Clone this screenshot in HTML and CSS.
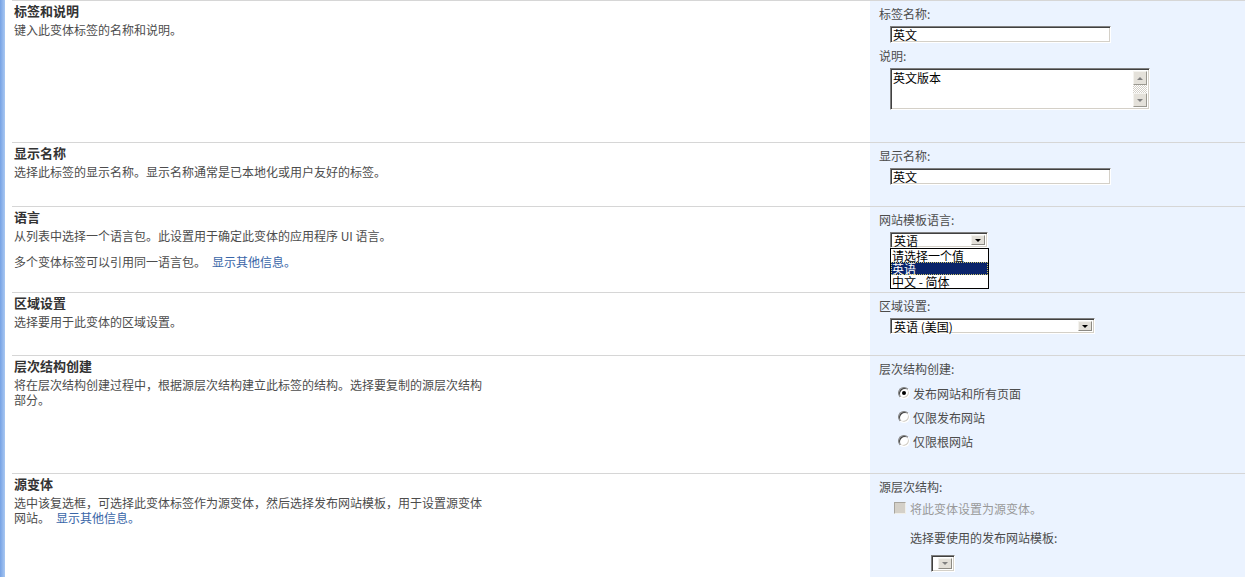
FILE: index.html
```html
<!DOCTYPE html>
<html lang="zh-CN">
<head>
	<meta charset="utf-8">
	<title>变体标签</title>
	<link rel="stylesheet" href="styles.css">
</head>
<body>
<div class="page">
	<div class="edge"></div>
	<div class="sections">

		<!-- 标签和说明 -->
		<div class="section">
			<div class="section-info">
				<h3>标签和说明</h3>
				<p>键入此变体标签的名称和说明。</p>
			</div>
			<div class="section-body gap-32">
				<div class="field-label">标签名称:</div>
				<div class="field"><input class="textbox sunken" type="text" value="英文"></div>
				<div class="field-label">说明:</div>
				<div class="field">
					<div class="textarea sunken">
						<div class="textarea-text">英文版本</div>
						<div class="scrollbar">
							<div class="scroll-btn"><span class="arrow-up"></span></div>
							<div class="scroll-track"></div>
							<div class="scroll-btn"><span class="arrow-down grey"></span></div>
						</div>
					</div>
				</div>
			</div>
		</div>

		<!-- 显示名称 -->
		<div class="section">
			<div class="section-info">
				<h3>显示名称</h3>
				<p>选择此标签的显示名称。显示名称通常是已本地化或用户友好的标签。</p>
			</div>
			<div class="section-body">
				<div class="field-label">显示名称:</div>
				<div class="field"><input class="textbox sunken" type="text" value="英文"></div>
			</div>
		</div>

		<!-- 语言 -->
		<div class="section">
			<div class="section-info">
				<h3>语言</h3>
				<p>从列表中选择一个语言包。此设置用于确定此变体的应用程序 UI 语言。</p>
				<p>多个变体标签可以引用同一语言包。<a class="more" href="#">显示其他信息。</a></p>
			</div>
			<div class="section-body gap-44">
				<div class="field-label">网站模板语言:</div>
				<div class="field">
					<div class="select-wrap">
						<div class="select sunken">
							<span class="select-text">英语</span>
							<span class="select-btn"><span class="arrow-down"></span></span>
						</div>
						<ul class="dropdown">
							<li>请选择一个值</li>
							<li class="selected">英语</li>
							<li>中文 - 简体</li>
						</ul>
					</div>
				</div>
			</div>
		</div>

		<!-- 区域设置 -->
		<div class="section">
			<div class="section-info">
				<h3>区域设置</h3>
				<p>选择要用于此变体的区域设置。</p>
			</div>
			<div class="section-body">
				<div class="field-label">区域设置:</div>
				<div class="field">
					<div class="select wide sunken">
						<span class="select-text">英语 (美国)</span>
						<span class="select-btn"><span class="arrow-down"></span></span>
					</div>
				</div>
			</div>
		</div>

		<!-- 层次结构创建 -->
		<div class="section">
			<div class="section-info">
				<h3>层次结构创建</h3>
				<p>将在层次结构创建过程中，根据源层次结构建立此标签的结构。选择要复制的源层次结构部分。</p>
			</div>
			<div class="section-body gap-20">
				<div class="field-label">层次结构创建:</div>
				<div class="radio-list">
					<div class="radio-row"><span class="radio checked"></span>发布网站和所有页面</div>
					<div class="radio-row"><span class="radio"></span>仅限发布网站</div>
					<div class="radio-row"><span class="radio"></span>仅限根网站</div>
				</div>
			</div>
		</div>

		<!-- 源变体 -->
		<div class="section last">
			<div class="section-info">
				<h3>源变体</h3>
				<p>选中该复选框，可选择此变体标签作为源变体，然后选择发布网站模板，用于设置源变体网站。<a class="more" href="#">显示其他信息。</a></p>
			</div>
			<div class="section-body">
				<div class="field-label">源层次结构:</div>
				<div class="check-row"><span class="checkbox"></span>将此变体设置为源变体。</div>
				<div class="sub-label">选择要使用的发布网站模板:</div>
				<div class="sub-field">
					<div class="select tiny sunken">
						<span class="select-text"></span>
						<span class="select-btn"><span class="arrow-down grey"></span></span>
					</div>
				</div>
			</div>
		</div>

	</div>
</div>
</body>
</html>
```

FILE: styles.css
```css
* { box-sizing: border-box; }

body {
	margin: 0;
	background: #fff;
	color: #4c4c4c;
	font-family: "Noto Sans CJK SC", sans-serif;
	font-size: 12px;
}

.page { display: flex; min-height: 100vh; }
.edge { width: 5px; background: linear-gradient(to right, #76a2e4, #a9c8f2); }

.sections {
	flex: 1;
	margin: 0 3px 0 7px;
	display: flex;
	flex-direction: column;
}

.section { display: flex; border-top: 1px solid #d6d6d6; }
.section.last { flex: 1; }

.section-info { width: 858px; padding: 2px 0 0 2px; }
.section-info h3 {
	margin: 0;
	font-size: 13px;
	line-height: 16px;
	font-weight: bold;
	color: #333;
}
.section-info p { margin: 3px 0 0; max-width: 470px; line-height: 15px; }
.section-info p + p { margin-top: 11px; }

a.more { color: #3966a8; text-decoration: none; margin-left: 6px; }

.section-body { flex: 1; background: #ebf3ff; padding: 5px 0 21px 9px; }
.section-body.gap-20 { padding-bottom: 20px; }
.section-body.gap-32 { padding-bottom: 32px; }
.section-body.gap-44 { padding-bottom: 44px; }

.field-label { line-height: 16px; color: #4c4c4c; }
.field { margin-top: 4px; padding-left: 11px; }
.field + .field-label { margin-top: 5px; }

/* classic sunken border */
.sunken {
	border: 1px solid;
	border-color: #808080 #fff #fff #808080;
	box-shadow: inset 1px 1px 0 #404040, inset -1px -1px 0 #d4d0c8;
	background: #fff;
}

.textbox {
	display: block;
	width: 221px;
	height: 17px;
	margin: 0;
	padding: 0 2px;
	font-family: inherit;
	font-size: 12px;
	color: #000;
	outline: none;
}

.textarea { display: flex; width: 260px; height: 42px; padding: 2px; }
.textarea-text { flex: 1; color: #000; line-height: 13px; padding-left: 0; }

.scrollbar { width: 14px; display: flex; flex-direction: column; }
.scroll-btn {
	height: 14px;
	display: flex;
	align-items: center;
	justify-content: center;
	background: #e4e1da;
	border: 1px solid;
	border-color: #f4f3ef #9a9890 #9a9890 #f4f3ef;
}
.scroll-track {
	flex: 1;
	background-image: repeating-conic-gradient(#d4d0c8 0 25%, #fff 0 50%);
	background-size: 2px 2px;
}

.arrow-up, .arrow-down { width: 0; height: 0; border-left: 3px solid transparent; border-right: 3px solid transparent; }
.arrow-up { border-bottom: 3px solid #808080; }
.arrow-down { border-top: 3px solid #000; }
.arrow-down.grey { border-top-color: #808080; }

.select-wrap { position: relative; width: 98px; }
.select { display: flex; width: 98px; height: 16px; padding: 2px; }
.select.wide { width: 205px; }
.select.tiny { width: 24px; height: 17px; }
.select-text { flex: 1; line-height: 12px; color: #000; padding-left: 1px; white-space: nowrap; }
.select-btn {
	width: 14px;
	display: flex;
	align-items: center;
	justify-content: center;
	background: #e2dfd8;
	border: 1px solid;
	border-color: #f4f3ef #8c8a84 #8c8a84 #f4f3ef;
}

.dropdown {
	position: absolute;
	top: 100%;
	left: 0;
	width: 99px;
	margin: 0;
	padding: 0;
	list-style: none;
	background: #fff;
	border: 1px solid #000;
	color: #000;
}
.dropdown li { height: 13px; line-height: 13px; padding-left: 1px; white-space: nowrap; }
.dropdown li.selected { background: #0a246a; color: #fff; outline: 1px dotted #c8c26c; outline-offset: -1px; }

.radio-list { margin-top: 4px; padding-left: 19px; }
.radio-row { display: flex; align-items: center; gap: 3px; height: 24px; color: #4c4c4c; }
.radio {
	width: 12px;
	height: 12px;
	border-radius: 50%;
	border: 1px solid;
	border-color: #808080 #fff #fff #808080;
	box-shadow: inset 1px 1px 0 #404040, inset -1px -1px 0 #d4d0c8;
	background: #fff;
	display: flex;
	align-items: center;
	justify-content: center;
}
.radio.checked::after { content: ""; width: 4px; height: 4px; border-radius: 50%; background: #000; }

.check-row { display: flex; align-items: center; gap: 4px; height: 20px; margin-top: 3px; padding-left: 15px; color: #999; }
.checkbox {
	width: 12px;
	height: 12px;
	background: #d4d0c8;
	border: 1px solid;
	border-color: #a8a59e #f0efea #f0efea #a8a59e;
}

.sub-label { margin-top: 12px; padding-left: 31px; line-height: 16px; color: #4c4c4c; }
.sub-field { margin-top: 9px; padding-left: 52px; }
```
